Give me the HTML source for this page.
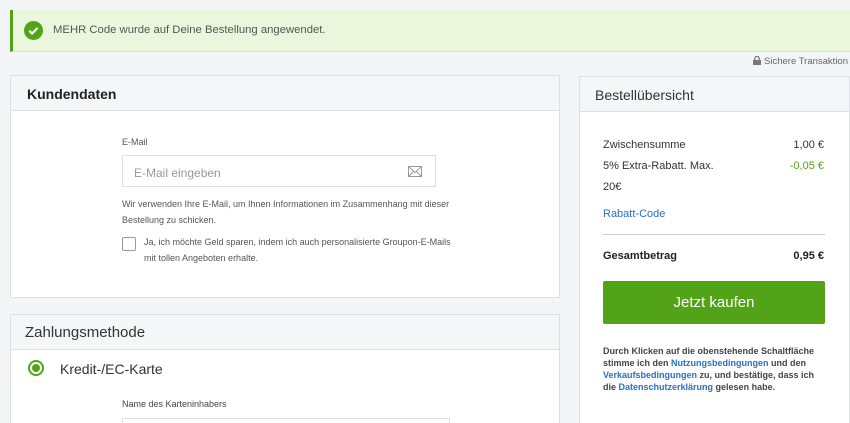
<!DOCTYPE html>
<html style="width:850px;height:423px;overflow:hidden"><head><meta charset="utf-8"><style>
*{box-sizing:border-box;margin:0;padding:0}
body{width:850px;height:423px;overflow:hidden;background:#f4f5f7;font-family:"Liberation Sans",sans-serif;color:#333;position:relative}
.abs{position:absolute}
.banner{left:10px;top:10px;width:840px;height:42px;background:#eaf7dc;border-left:3px solid #53a318;border-bottom:1px solid #cfe3c0}
.panel{background:#fff;border:1px solid #dcdfe3}
.hdr{background:#f5f6f7;border-bottom:1px solid #dcdfe3;position:absolute;left:0;right:0;top:0}
a{color:#2a6fc9;text-decoration:none}
</style></head><body>
<div class="abs banner">
 <svg class="abs" style="left:11px;top:11px" width="19" height="19" viewBox="0 0 19 19"><circle cx="9.5" cy="9.5" r="9.5" fill="#53a318"/><path d="M5.3 9.8l2.8 2.7 5.5-5.6" stroke="#fff" stroke-width="2.2" fill="none"/></svg>
 <div class="abs" style="left:40px;top:14px;font-size:11.3px;color:#555;white-space:nowrap">MEHR Code wurde auf Deine Bestellung angewendet.</div>
</div>
<div class="abs" style="right:2px;top:56px;font-size:9.5px;color:#666;white-space:nowrap">
<svg width="8" height="9" viewBox="0 0 8 9" style="vertical-align:-1px"><rect x="0" y="4" width="8" height="5" fill="#777"/><path d="M1.8 4V2.6a2.2 2.2 0 0 1 4.4 0V4" stroke="#777" stroke-width="1.3" fill="none"/></svg> Sichere Transaktion</div>

<div class="abs panel" style="left:10px;top:75px;width:550px;height:223px">
 <div class="hdr" style="height:35px"><div class="abs" style="left:16px;top:10px;font-size:14px;font-weight:bold;color:#222">Kundendaten</div></div>
 <div class="abs" style="left:111px;top:61px;font-size:9px;color:#555">E-Mail</div>
 <div class="abs" style="left:111px;top:79px;width:314px;height:32px;border:1px solid #dcdfe3">
  <div class="abs" style="left:11px;top:10px;font-size:12px;color:#999">E-Mail eingeben</div>
  <svg class="abs" style="left:285px;top:10px" width="14" height="11" viewBox="0 0 14 11"><rect x="0.5" y="0.5" width="13" height="10" fill="none" stroke="#999"/><path d="M0.5 0.5l6.5 6 6.5-6M0.5 10.5l5-5M13.5 10.5l-5-5" stroke="#999" fill="none"/></svg>
 </div>
 <div class="abs" style="left:111px;top:120px;width:332px;font-size:9px;line-height:16px;color:#555">Wir verwenden Ihre E-Mail, um Ihnen Informationen im Zusammenhang mit dieser Bestellung zu schicken.</div>
 <div class="abs" style="left:111px;top:161px;width:14px;height:14px;border:1px solid #999;border-radius:2px;background:#fff"></div>
 <div class="abs" style="left:133px;top:158px;width:310px;font-size:9px;line-height:16px;color:#555">Ja, ich möchte Geld sparen, indem ich auch personalisierte Groupon-E-Mails mit tollen Angeboten erhalte.</div>
</div>

<div class="abs panel" style="left:10px;top:314px;width:550px;height:109px;border-bottom:none">
 <div class="hdr" style="height:35px"><div class="abs" style="left:14px;top:9px;font-size:15px;color:#333">Zahlungsmethode</div></div>
 <div class="abs" style="left:17px;top:45px;width:16px;height:16px;border-radius:50%;border:2px solid #53a318;background:#fff"><div class="abs" style="left:2px;top:2px;width:8px;height:8px;border-radius:50%;background:#53a318"></div></div>
 <div class="abs" style="left:49px;top:46px;font-size:14px;color:#333">Kredit-/EC-Karte</div>
 <div class="abs" style="left:111px;top:84px;font-size:9px;color:#444">Name des Karteninhabers</div>
 <div class="abs" style="left:111px;top:103px;width:328px;height:6px;border:1px solid #dcdfe3;border-bottom:none"></div>
</div>

<div class="abs panel" style="left:579px;top:76px;width:271px;height:347px;border-bottom:none">
 <div class="hdr" style="height:35px"><div class="abs" style="left:15px;top:10px;font-size:14px;color:#333">Bestellübersicht</div></div>
 <div class="abs" style="left:23px;top:62px;font-size:11px;color:#333">Zwischensumme</div>
 <div class="abs" style="right:25px;top:62px;font-size:11px;color:#333">1,00 €</div>
 <div class="abs" style="left:23px;top:83px;font-size:11px;color:#333">5% Extra-Rabatt. Max.</div>
 <div class="abs" style="right:25px;top:83px;font-size:11px;color:#53a318">-0,05 €</div>
 <div class="abs" style="left:23px;top:104px;font-size:11px;color:#333">20€</div>
 <div class="abs" style="left:23px;top:131px;font-size:11px"><a>Rabatt-Code</a></div>
 <div class="abs" style="left:23px;top:157px;width:222px;height:1px;background:#ccc"></div>
 <div class="abs" style="left:23px;top:173px;font-size:11px;font-weight:bold;color:#222">Gesamtbetrag</div>
 <div class="abs" style="right:25px;top:173px;font-size:11px;font-weight:bold;color:#222">0,95 €</div>
 <div class="abs" style="left:23px;top:204px;width:222px;height:43px;background:#53a318;border-radius:2px;color:#fff;font-size:15px;text-align:center;line-height:43px">Jetzt kaufen</div>
 <div class="abs" style="left:23px;top:268px;width:222px;font-size:9px;line-height:12px;color:#444;font-weight:bold">Durch Klicken auf die obenstehende Schaltfläche stimme ich den <a>Nutzungsbedingungen</a> und den <a>Verkaufsbedingungen</a> zu, und bestätige, dass ich die <a>Datenschutzerklärung</a> gelesen habe.</div>
</div>
</body></html>
